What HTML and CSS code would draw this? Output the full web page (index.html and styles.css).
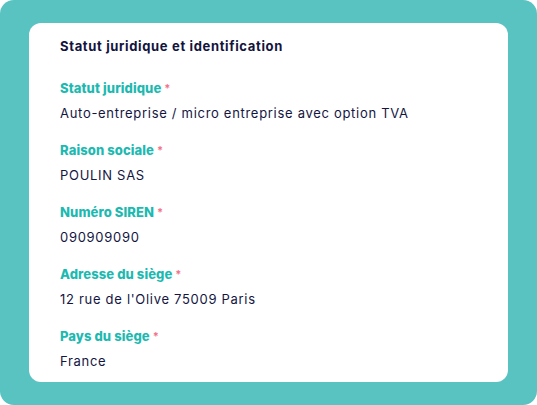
FILE: index.html
```html
<!DOCTYPE html>
<html lang="fr">
<head>
<meta charset="utf-8">
<link rel="stylesheet" href="styles.css">
</head>
<body>
<div class="frame">
  <section class="card">
    <h2 class="title">Statut juridique et identification</h2>
    <div class="field">
      <div class="label">Statut juridique <span class="req">*</span></div>
      <div class="value">Auto-entreprise / micro entreprise avec option TVA</div>
    </div>
    <div class="field">
      <div class="label">Raison sociale <span class="req">*</span></div>
      <div class="value">POULIN SAS</div>
    </div>
    <div class="field">
      <div class="label">Numéro SIREN <span class="req">*</span></div>
      <div class="value">090909090</div>
    </div>
    <div class="field">
      <div class="label">Adresse du siège <span class="req">*</span></div>
      <div class="value">12 rue de l'Olive 75009 Paris</div>
    </div>
    <div class="field">
      <div class="label">Pays du siège <span class="req">*</span></div>
      <div class="value">France</div>
    </div>
  </section>
</div>
</body>
</html>
```

FILE: styles.css
```css
html, body {
  margin: 0;
  padding: 0;
  background: #ffffff;
}
body {
  font-family: Inter, "Noto Sans", sans-serif;
  color: #14163f;
}
.frame {
  width: 537px;
  height: 405px;
  box-sizing: border-box;
  background: #58c3c1;
  border-radius: 14px;
  padding: 23px 29px;
}
.card {
  height: 359px;
  box-sizing: border-box;
  background: #ffffff;
  border-radius: 12px;
  padding: 13px 31px 0;
  display: flex;
  flex-direction: column;
  gap: 17px;
}
.title {
  margin: 0 0 5px;
  font-size: 13px;
  font-weight: 700;
  line-height: 20px;
  letter-spacing: 0.65px;
  color: #12143d;
}
.field {
  display: flex;
  flex-direction: column;
  gap: 5px;
}
.label {
  font-size: 13px;
  font-weight: 800;
  line-height: 20px;
  letter-spacing: 0.1px;
  color: #1db9b1;
}
.req {
  color: #f2718a;
  font-size: 11px;
  font-weight: 700;
  vertical-align: top;
  letter-spacing: 0;
}
.value {
  font-size: 13px;
  line-height: 20px;
  letter-spacing: 0.7px;
  color: #14163f;
}
```
